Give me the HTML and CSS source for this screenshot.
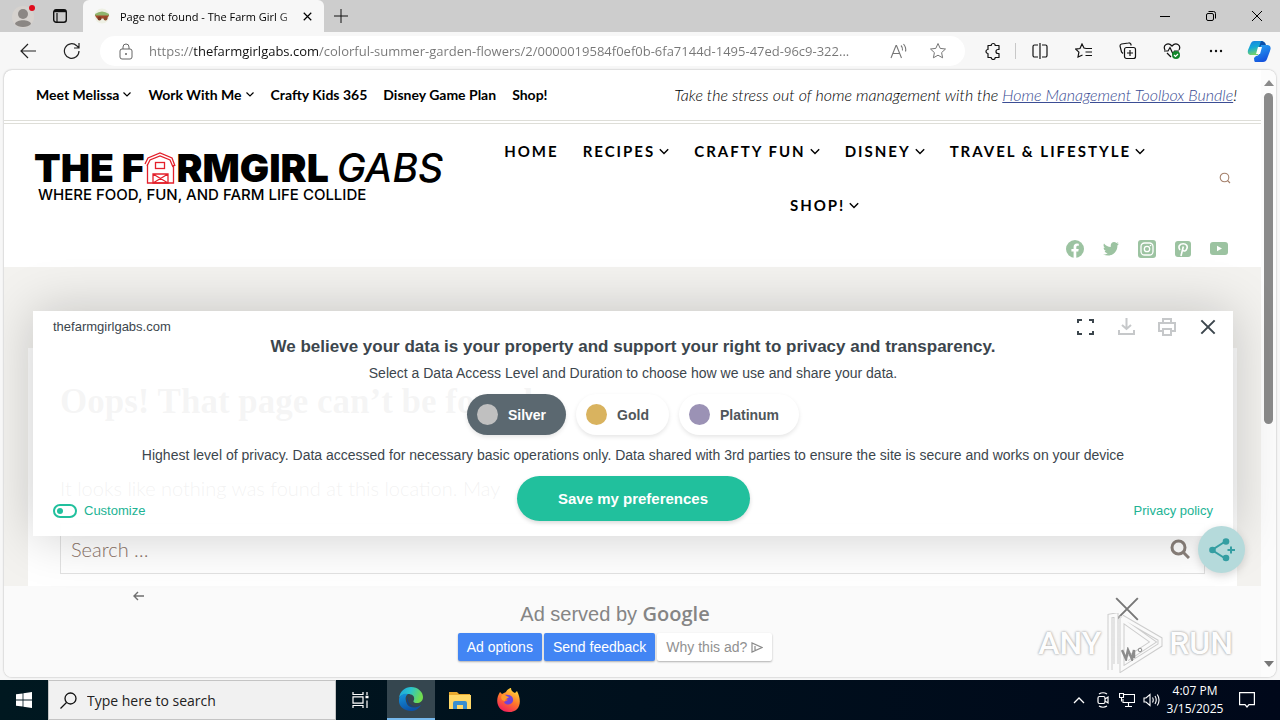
FILE: index.html
```html
<!DOCTYPE html>
<html lang="en">
<head>
    <meta charset="UTF-8">
    <meta name="viewport" content="width=device-width, initial-scale=1.0">
    <title>Page not found - The Farm Girl Gabs</title>
    <link rel="stylesheet" href="styles.css">
</head>
<body>

<svg class="symbols" aria-hidden="true">
    <symbol id="chevron" viewBox="0 0 10 10"><path d="M1.500 3.500 5 7l3.500-3.500" fill="none" stroke="currentColor" stroke-width="1.200"/></symbol>
    <symbol id="cross" viewBox="0 0 12 12"><path d="m1 1 10 10M11 1 1 11" fill="none" stroke="currentColor"/></symbol>
    <symbol id="star" viewBox="0 0 18 18"><path d="m9 1.500 2.200 4.900 5.300.6-3.900 3.600 1 5.200L9 13.200l-4.600 2.600 1-5.200L1.500 7l5.300-.6z" fill="none" stroke="currentColor" stroke-linejoin="round"/></symbol>
</svg>

<div class="browser">
    <div class="tab-strip">
        <button class="profile" aria-label="Profile">
            <svg width="24" height="26" viewBox="0 0 24 26"><circle cx="11" cy="14" r="11" fill="#d6d2ce"/><circle cx="11" cy="11" r="5" fill="#8b8784"/><path d="M3 21c1-5 15-5 16 0-3 4-13 4-16 0z" fill="#8b8784"/><circle cx="20" cy="5" r="3" fill="#e00b1c"/></svg>
        </button>
        <button class="tab-actions" aria-label="Tab actions">
            <svg width="14" height="14" viewBox="0 0 14 14"><rect x=".7" y=".7" width="12.600" height="12.600" rx="2.500" fill="none" stroke="#111" stroke-width="1.400"/><path d="M1 2h12" stroke="#111" stroke-width="2.400"/><path d="M4 4v9" stroke="#111" stroke-width="1.200"/></svg>
        </button>
        <div class="tab">
            <svg width="16" height="16" viewBox="0 0 16 16"><circle cx="8" cy="8" r="7.500" fill="#eef0e4"/><path d="M1 6q7-5 14 0v2H1z" fill="#8fb56d"/><path d="M1 7.500h14l-2 3H3z" fill="#a5482b"/><circle cx="5.500" cy="10.500" r="2" fill="#7a3a22"/><circle cx="11.500" cy="10.500" r="2" fill="#8b4b2c"/></svg>
            <span class="tab-title">Page not found - The Farm Girl G</span>
            <button class="tab-close" aria-label="Close tab"><svg width="9" height="9" viewBox="0 0 12 12"><use href="#cross" stroke-width="1.600"/></svg></button>
        </div>
        <button class="new-tab" aria-label="New tab"><svg width="14" height="14" viewBox="0 0 14 14"><path d="M7 0v14M0 7h14" stroke="#111"/></svg></button>
        <div class="window-buttons">
            <button aria-label="Minimize"><svg width="10" height="10" viewBox="0 0 10 10"><path d="M0 5.500h10" stroke="#000"/></svg></button>
            <button aria-label="Restore"><svg width="10" height="10" viewBox="0 0 10 10" fill="none" stroke="#000"><rect x=".5" y="2.500" width="7" height="7" rx="1.500"/><path d="M2.500.5h5a2 2 0 0 1 2 2v5"/></svg></button>
            <button aria-label="Close"><svg width="12" height="12" viewBox="0 0 12 12"><use href="#cross"/></svg></button>
        </div>
    </div>

    <div class="toolbar">
        <button class="nav-button" aria-label="Back"><svg width="16" height="16" viewBox="0 0 16 16"><path d="M16 8H1M8 1 1 8l7 7" fill="none" stroke="#222" stroke-width="1.200"/></svg></button>
        <button class="nav-button" aria-label="Refresh"><svg width="18" height="18" viewBox="0 0 18 18"><path d="M16 9a7.300 7.300 0 1 1-2.300-5.300L16 6M16 1v5h-5" fill="none" stroke="#222" stroke-width="1.200"/></svg></button>
        <div class="address">
            <svg width="14" height="17" viewBox="0 0 14 17" fill="none" stroke="#666"><rect x="1" y="6" width="12" height="10" rx="2"/><path d="M4 6V4a3 3 0 0 1 6 0v2"/><circle cx="7" cy="11" r="1" fill="#666" stroke="none"/></svg>
            <input class="address-input" type="text" aria-label="Address" value="https://thefarmgirlgabs.com/colorful-summer-garden-flowers/2/0000019584f0ef0b-6fa7144d-1495-47ed-96c9-322...">
            <button aria-label="Read aloud"><svg width="18" height="16" viewBox="0 0 18 16" fill="none" stroke="#767676" stroke-width="1.100"><path d="M1 15 6 2.500h.5L11.500 15M3 10.500h7M11 2.500q2 2 1.500 5M13.500 1q3 3.500 2 7.500"/></svg></button>
            <button aria-label="Favorite this page"><svg width="18" height="18" class="faint"><use href="#star"/></svg></button>
        </div>
        <div class="toolbar-actions">
            <button aria-label="Extensions"><svg width="18" height="18" viewBox="0 0 18 18"><path d="M4 3.500h3.200a2 2 0 0 1 4 0H15v4h-1a2 2 0 0 0 0 4h1v4h-3.800a2 2 0 0 1-4 0H4v-4a2 2 0 0 1 0-4z" fill="none" stroke="#111" stroke-width="1.200" stroke-linejoin="round"/></svg></button>
            <span class="divider"></span>
            <button aria-label="Split screen"><svg width="16" height="16" viewBox="0 0 16 16" fill="none" stroke="#111" stroke-width="1.200"><path d="M6 2H2.500A1.500 1.500 0 0 0 1 3.500v9A1.500 1.500 0 0 0 2.500 14H6M10 2h3.500A1.500 1.500 0 0 1 15 3.500v9a1.500 1.500 0 0 1-1.500 1.500H10M8 0v16"/></svg></button>
            <button aria-label="Favorites"><svg width="18" height="16" viewBox="0 0 18 16" fill="none" stroke="#111" stroke-width="1.200"><path d="M11 5.500 9 5 7 1 5 5.500l-4.200.6 3.100 3L3 14l4.500-2M11 5.500h6M10.500 9H17M10.500 12.500H17"/></svg></button>
            <button aria-label="Collections"><svg width="18" height="18" viewBox="0 0 18 18" fill="none" stroke="#111" stroke-width="1.200"><path d="M4 11.500 2.500 10 1 4a2 2 0 0 1 1.500-2l7-1A2 2 0 0 1 12 2.500v1"/><rect x="5.500" y="5.500" width="11" height="11" rx="2"/><path d="M11 8v6M8 11h6"/></svg></button>
            <button aria-label="Browser essentials"><svg width="18" height="18" viewBox="0 0 18 18" fill="none" stroke="#111" stroke-width="1.200"><path d="M2 8C-.5 3 5-.5 9 4c4-4.500 9.500-1 7 4M1 9h4l2-3.500L10 12l1.500-3H16M4 11l4 4"/><circle cx="13" cy="13" r="4" fill="#13872c" stroke="none"/><path d="m11 13 1.500 1.500L15 12" stroke="#fff"/></svg></button>
            <button aria-label="Settings and more"><svg width="14" height="4" viewBox="0 0 14 4" fill="#111"><circle cx="2" cy="2" r="1.200"/><circle cx="7" cy="2" r="1.200"/><circle cx="12" cy="2" r="1.200"/></svg></button>
            <button aria-label="Copilot"><svg width="24" height="24" viewBox="0 0 24 24"><defs><linearGradient id="cop-a" x2=".3" y2="1"><stop stop-color="#1a7de0"/><stop offset=".5" stop-color="#12a8d8"/><stop offset="1" stop-color="#74d36b"/></linearGradient><linearGradient id="cop-b" x2=".4" y2="1"><stop stop-color="#2aa9f5"/><stop offset="1" stop-color="#1554dd"/></linearGradient></defs><path d="M7 2h9l-5 14H3q-3-1-2-5l3-7q1-2 3-2z" fill="url(#cop-a)"/><path d="M14 2q4 0 5 4l-7 2z" fill="#0c50aa"/><path d="M14 6h7q4 1 2 6l-3 8q-1 3-4 3H8q-1-1-1-4l2-2q3 0 4-4z" fill="url(#cop-b)"/><path d="M11 8h4l-2 7H9z" fill="#fff"/></svg></button>
        </div>
    </div>

    <div class="viewport">
        <div class="page">
            <div class="top-bar">
                <nav class="top-nav" aria-label="Secondary">
                    <a href="#">Meet Melissa<svg width="10" height="10"><use href="#chevron"/></svg></a>
                    <a href="#">Work With Me<svg width="10" height="10"><use href="#chevron"/></svg></a>
                    <a href="#">Crafty Kids 365</a>
                    <a href="#">Disney Game Plan</a>
                    <a href="#">Shop!</a>
                </nav>
                <p class="notice">Take the stress out of home management with the <a href="#">Home Management Toolbox Bundle</a>!</p>
            </div>

            <header class="site-header">
                <div class="logo">
                    <div class="logo-name">
                        <strong>THE F</strong>
                        <svg class="barn" width="32" height="32" viewBox="0 0 32 32" fill="none" stroke="#e3202b" stroke-width="1.300"><path d="M1 12 4 6l12-5 12 5 3 8M3 14l3-6 10-4 10 4 3 7M3.500 12v19h26V13"/><rect x="11.500" y="10.500" width="9" height="6"/><path d="M9 22h15v9H9zM9 22l15 9M24 22 9 31"/></svg>
                        <strong>RMGIRL</strong>
                        <em>GABS</em>
                    </div>
                    <div class="logo-tagline">WHERE FOOD, FUN, AND FARM LIFE COLLIDE</div>
                </div>
                <nav class="main-nav" aria-label="Primary">
                    <a href="#">HOME</a>
                    <a href="#">RECIPES<svg width="12" height="12"><use href="#chevron"/></svg></a>
                    <a href="#">CRAFTY FUN<svg width="12" height="12"><use href="#chevron"/></svg></a>
                    <a href="#">DISNEY<svg width="12" height="12"><use href="#chevron"/></svg></a>
                    <a href="#">TRAVEL &amp; LIFESTYLE<svg width="12" height="12"><use href="#chevron"/></svg></a>
                    <a href="#">SHOP!<svg width="12" height="12"><use href="#chevron"/></svg></a>
                </nav>
                <button class="search-toggle" aria-label="Search"><svg width="12" height="12" viewBox="0 0 12 12" fill="none" stroke="#a5806b" stroke-width="1.100"><circle cx="5.500" cy="5.500" r="4.300"/><path d="m8.500 8.500 2.500 2.500"/></svg></button>
            </header>

            <div class="social">
                <a href="#" aria-label="Facebook"><svg width="18" height="18" viewBox="0 0 18 18"><circle cx="9" cy="9" r="9" fill="#9cc3a1"/><path d="M7.600 18v-6.500H5.400V9h2.200V7c0-2.300 1.300-3.500 3.400-3.500l1.800.2v2.100h-1c-1.200 0-1.500.7-1.500 1.400V9h2.400l-.4 2.500h-2V18z" fill="#fff"/></svg></a>
                <a href="#" aria-label="Twitter"><svg width="16" height="14" viewBox="0 0 16 14"><path d="M16 1.700l-1.600 1.800C14.500 10 9 16 0 12.500c2 .1 3.500-.4 4.700-1.300C3.200 11 2 10.200 1.700 8.900h1.400C1.600 8.400.6 7.200.6 5.700l1.400.4C.5 5 .2 3.200 1 1.600c1.800 2.100 4 3.300 6.800 3.500C7.200 2.200 8.900 0 11 0c1 0 1.800.4 2.400 1l2-.8-1.300 1.900z" fill="#9cc3a1"/></svg></a>
                <a href="#" aria-label="Instagram"><svg width="18" height="18" viewBox="0 0 18 18" fill="none"><rect width="18" height="18" rx="3" fill="#9cc3a1"/><rect x="3" y="3" width="12" height="12" rx="3.500" stroke="#fff" stroke-width="1.300"/><circle cx="9" cy="9" r="2.700" stroke="#fff" stroke-width="1.300"/><circle cx="12.500" cy="5.500" r=".8" fill="#fff"/></svg></a>
                <a href="#" aria-label="Pinterest"><svg width="16" height="16" viewBox="0 0 16 16" fill="none"><rect width="16" height="16" rx="3" fill="#9cc3a1"/><path d="M5 9C2.500 5.500 5 2.700 8.200 2.700c3.300 0 4.600 2.400 3.700 4.900-.8 2.700-3.200 3.100-4.200 1.400M8.300 5.500 6 15" stroke="#fff" stroke-width="1.600"/></svg></a>
                <a href="#" aria-label="YouTube"><svg width="18" height="13" viewBox="0 0 18 13"><rect width="18" height="13" rx="3" fill="#9cc3a1"/><path d="m7 3.800 5 2.700-5 2.700z" fill="#fff"/></svg></a>
            </div>

            <main class="content-area">
                <section class="not-found">
                    <h1>Oops! That page can’t be found.</h1>
                    <p>It looks like nothing was found at this location. May</p>
                    <form class="search-form">
                        <input type="search" aria-label="Search for" placeholder="Search …">
                        <button type="button" aria-label="Search"><svg width="20" height="20" viewBox="0 0 20 20" fill="none" stroke="#8b827c" stroke-width="3"><circle cx="8.500" cy="8.500" r="6.500"/><path d="m13 13 6 6"/></svg></button>
                    </form>
                </section>
            </main>
        </div>

        <div class="scrollbar">
            <svg width="10" height="6" viewBox="0 0 10 6"><path d="M5 0l5 6H0z" fill="#8a8a8a"/></svg>
            <div class="scroll-track"><div class="scroll-thumb"></div></div>
            <svg width="10" height="6" viewBox="0 0 10 6"><path d="M5 6l5-6H0z" fill="#777"/></svg>
        </div>

        <aside class="ad-bar">
            <div class="ad-frame">
                <button class="ad-back" aria-label="Back"><svg width="11" height="10" viewBox="0 0 11 10"><path d="M11 5H1M5 1 1 5l4 4" fill="none" stroke="#6f6f6f" stroke-width="1.400"/></svg></button>
                <div class="ad-title">Ad served by <b>Google</b></div>
                <div class="ad-buttons">
                    <button class="ad-blue">Ad options</button>
                    <button class="ad-blue">Send feedback</button>
                    <button class="ad-white">Why this ad? <svg width="12" height="11" viewBox="0 0 12 11" fill="none" stroke="#8a8a8a" stroke-width="1.200"><path d="M1 1v9l10-4.500zM4 4v4"/></svg></button>
                </div>
            </div>
            <button class="ad-close" aria-label="Close ad"><svg width="26" height="26" viewBox="0 0 12 12"><use href="#cross" stroke-width=".9"/></svg></button>
        </aside>

        <div class="watermark">
            <span>ANY</span>
            <div class="play">
                <svg width="56" height="60" viewBox="0 0 56 60" fill="none"><path d="M3 57V3l6-1v49M15 4l38 22v6L15 56V7l31 22-26 17" stroke="#cdcdcd" stroke-width="5"/><path d="M3 57V3l6-1v49M15 4l38 22v6L15 56V7l31 22-26 17" stroke="#fafafa" stroke-width="3"/></svg>
                <svg class="ad-mark" width="24" height="14" viewBox="0 0 24 14" fill="none" stroke="#8c8c8c" stroke-width="2.500"><path d="M1 3l4 9 2-9 4 9 2-9v8"/><circle cx="19" cy="3" r="1.800" stroke-width="1"/></svg>
            </div>
            <span>RUN</span>
        </div>

        <section class="consent" role="dialog" aria-labelledby="consent-title">
            <div class="consent-top">
                <span>thefarmgirlgabs.com</span>
                <div class="consent-tools">
                    <button aria-label="Full screen"><svg width="17" height="16" viewBox="0 0 17 16" fill="none" stroke="#3c464d" stroke-width="2"><path d="M1 4V1h4M12 1h4v3M16 12v3h-4M5 15H1v-3"/></svg></button>
                    <button aria-label="Download"><svg width="17" height="17" viewBox="0 0 17 17" fill="none" stroke="#c6c8ca" stroke-width="2"><path d="M1 12v4h15v-4M8.500 0v11M4 7l4.500 4L13 7"/></svg></button>
                    <button aria-label="Print"><svg width="18" height="18" viewBox="0 0 18 18" fill="none" stroke="#c6c8ca" stroke-width="2"><path d="M5 5V1h8v4M5 13H1V5h16v8h-4M5 11h8v6H5z"/></svg></button>
                    <button aria-label="Close"><svg width="16" height="16" viewBox="0 0 12 12"><use href="#cross" stroke-width="1.500"/></svg></button>
                </div>
            </div>
            <h2 id="consent-title">We believe your data is your property and support your right to privacy and transparency.</h2>
            <p class="consent-lead">Select a Data Access Level and Duration to choose how we use and share your data.</p>
            <div class="levels">
                <button class="level selected"><i class="dot silver"></i>Silver</button>
                <button class="level"><i class="dot gold"></i>Gold</button>
                <button class="level"><i class="dot platinum"></i>Platinum</button>
            </div>
            <p class="consent-detail">Highest level of privacy. Data accessed for necessary basic operations only. Data shared with 3rd parties to ensure the site is secure and works on your device</p>
            <div class="consent-bottom">
                <a class="customize" href="#"><svg width="24" height="14" viewBox="0 0 24 14"><rect x="1" y="1" width="22" height="12" rx="6" fill="none" stroke="#21c09d" stroke-width="2"/><circle cx="7" cy="7" r="3" fill="#21c09d"/></svg>Customize</a>
                <button class="save">Save my preferences</button>
                <a class="privacy" href="#">Privacy policy</a>
            </div>
        </section>

        <button class="share" aria-label="Share"><svg width="26" height="24" viewBox="0 0 26 24" fill="none" stroke="#349ea2" stroke-width="2"><path d="M17 3 3 12l14 9M18.500 12H26M22 8.500v7"/><g fill="#349ea2" stroke="none"><circle cx="3.500" cy="12" r="3.300"/><circle cx="17" cy="3.500" r="3.300"/><circle cx="17" cy="20" r="3.300"/></g></svg></button>
    </div>
</div>

<div class="taskbar">
    <button class="start" aria-label="Start"><svg width="16" height="16" viewBox="0 0 16 16" fill="#fff"><path d="M0 2.300 6.600 1.400v6.200H0zM7.400 1.300 16 0v7.600H7.400zM0 8.400h6.600v6.200L0 13.700zM7.400 8.400H16V16l-8.600-1.300z"/></svg></button>
    <label class="task-search">
        <svg width="17" height="17" viewBox="0 0 17 17" fill="none" stroke="#111" stroke-width="1.300"><circle cx="10.500" cy="6.500" r="5.500"/><path d="m6.500 10.500-6 6"/></svg>
        <input type="text" placeholder="Type here to search" aria-label="Type here to search">
    </label>
    <button class="task" aria-label="Task view"><svg width="17" height="16" viewBox="0 0 17 16" fill="none" stroke="#fff" stroke-width="1.200"><path d="M1 0v2.500h10V0M1 16v-2.500h10V16M1 4.800h10v6.400H1zM15 0v3M15 8.500V16"/><path d="M13.500 5h3" stroke-width="2.500"/></svg></button>
    <button class="task active" aria-label="Microsoft Edge"><svg width="24" height="24" viewBox="0 0 24 24"><defs><linearGradient id="edge-a" x2="1" y2=".3"><stop stop-color="#1ba0e0"/><stop offset=".5" stop-color="#2bc4cc"/><stop offset="1" stop-color="#70dc4f"/></linearGradient><linearGradient id="edge-b" x2=".4" y2="1"><stop stop-color="#1595dc"/><stop offset="1" stop-color="#0c52a8"/></linearGradient></defs><path d="M0 11C1 4 6 0 12 0c7 0 12 5 12 10 0 4-3 6-6 6-4 0-4-2-3-3 1-4-2-6-6-6-5 0-8 2-9 4z" fill="url(#edge-a)"/><path d="M0 12c1-5 6-6 9-5-3 2-3 6-1 10 2 4 8 5 14 1-3 5-7 6-10 6C5 24-1 19 0 12z" fill="url(#edge-b)"/><path d="M9 10c-3 5 1 11 8 10l5-2c-6 4-14 1-13-8z" fill="#123f86"/></svg></button>
    <button class="task" aria-label="File Explorer"><svg width="22" height="19" viewBox="0 0 22 19"><path d="M0 1h8l2 2h11v15H0z" fill="#e8a92e"/><path d="M0 4h22v14H0z" fill="#ffd868"/><path d="M4 18v-6q0-2 2-2h10q2 0 2 2v6h-4v-4H8v4z" fill="#398fd0"/></svg></button>
    <button class="task" aria-label="Firefox"><svg width="23" height="24" viewBox="0 0 23 24"><defs><linearGradient id="fox" x1=".8" x2=".3" y2="1"><stop stop-color="#ffe23d"/><stop offset=".5" stop-color="#ff7a2a"/><stop offset="1" stop-color="#f21d5c"/></linearGradient></defs><path d="M3 4l2 2 4-2c0-1 3-4 5-4 0 3 2 4 4 5l2-2c6 12 2 21-8 21C1 24-3 13 3 4z" fill="url(#fox)"/><path d="M8 7c3-1 9 1 8 6-1 4-7 5-9 1l4-2-4-2z" fill="#7142d9"/><path d="M5 7c4-1 4 2 7 2-1 2-4 1-4 4-3 0-5-3-3-6z" fill="#ff9b2c"/></svg></button>
    <div class="tray">
        <button aria-label="Show hidden icons"><svg width="12" height="8" viewBox="0 0 12 8"><path d="m1 7 5-5 5 5" fill="none" stroke="#fff" stroke-width="1.300"/></svg></button>
        <button aria-label="Meet now"><svg width="12" height="16" viewBox="0 0 12 16" fill="none" stroke="#fff" stroke-width="1.200"><rect x="1" y="4.500" width="7" height="7" rx="1.500"/><path d="m8 7 3-2v6L8 9M2 2q4-2.500 8 0M2 14q4 2.500 8 0"/></svg></button>
        <button aria-label="Network"><svg width="16" height="14" viewBox="0 0 16 14" fill="none" stroke="#fff" stroke-width="1.100"><path d="M5 1.500h10.500v8H4V6M9.500 9.500v4M6 13.500h7M.5.500h4v4h-4zM2.500 4.500v4"/></svg></button>
        <button aria-label="Volume"><svg width="17" height="14" viewBox="0 0 17 14" fill="none" stroke="#fff" stroke-width="1.100"><path d="M1 5h2l4-3.500v11L3 9H1zM9.500 4.500q1.500 2.500 0 5M12 3q2.500 4 0 8M14.300 1.500q3.500 5.500 0 11"/></svg></button>
        <div class="clock"><span>4:07 PM</span><span>3/15/2025</span></div>
        <button class="notifications" aria-label="Notifications"><svg width="16" height="16" viewBox="0 0 16 16"><path d="M.6.6h14.800v12H10L8 15l-2-2.400H.6z" fill="none" stroke="#fff" stroke-width="1.200"/></svg></button>
    </div>
</div>

</body>
</html>
```
FILE: styles.css
```css
* {
    box-sizing: border-box;
}
body {
    margin: 0;
    height: 100vh;
    display: flex;
    flex-direction: column;
    font-family: "Open Sans", "Noto Sans", sans-serif;
    background: #f7f7f7;
    overflow: hidden;
}
button {
    display: flex;
    align-items: center;
    justify-content: center;
    padding: 0;
    border: none;
    background: none;
    font-family: inherit;
    color: inherit;
    cursor: pointer;
}
svg {
    flex: none;
}
.symbols {
    position: absolute;
    width: 0;
    height: 0;
}
.browser {
    flex: 1;
    min-height: 0;
    display: flex;
    flex-direction: column;
}

/* Tabs */
.tab-strip {
    display: flex;
    align-items: stretch;
    height: 32px;
    flex: none;
    background: #cdcdcd;
}
.profile {
    width: 48px;
}
.tab-actions {
    width: 24px;
}
.tab {
    display: flex;
    align-items: center;
    gap: 10px;
    width: 241px;
    margin-left: 11px;
    padding: 0 12px 0 11px;
    background: #f7f7f7;
    border-radius: 6px 6px 0 0;
    font-size: 11px;
}
.tab-title {
    flex: 1;
    white-space: nowrap;
    -webkit-mask-image: linear-gradient(90deg, #000 92%, rgba(0, 0, 0, 0.3));
    mask-image: linear-gradient(90deg, #000 92%, rgba(0, 0, 0, 0.3));
}
.new-tab {
    width: 34px;
}
.window-buttons {
    display: flex;
    margin-left: auto;
}
.window-buttons button {
    width: 46px;
}

/* Toolbar */
.toolbar {
    display: flex;
    align-items: center;
    height: 38px;
    flex: none;
    padding: 0 0 0 6px;
}
.nav-button {
    width: 44px;
    height: 32px;
}
.address {
    flex: 1;
    display: flex;
    align-items: center;
    height: 30px;
    margin: 0 6px;
    padding: 0 18px 0 19px;
    border-radius: 15px;
    background: #fff;
}
.address-input {
    flex: 1;
    min-width: 0;
    margin: 0 4px 0 16px;
    padding: 0;
    border: none;
    outline: none;
    font-family: inherit;
    font-size: 13px;
    color: transparent;
    background: linear-gradient(90deg, #767676 45px, #111 45px, #111 170px, #767676 170px);
    -webkit-background-clip: text;
    background-clip: text;
}
.address button {
    width: 40px;
}
.address button:last-child {
    width: 18px;
    margin-left: 10px;
}
.faint {
    color: #767676;
}
.toolbar-actions {
    display: flex;
    align-items: center;
}
.toolbar-actions button {
    width: 44px;
    height: 32px;
}
.toolbar-actions button:last-child {
    width: 42px;
}
.divider {
    width: 1px;
    height: 16px;
    margin-right: 2px;
    background: #c8c8c8;
}

/* Web page */
.viewport {
    position: relative;
    flex: 1;
    min-height: 0;
    display: flex;
    margin: 0 4px 3px;
    border-radius: 8px;
    background: #fff;
    box-shadow: 0 0 2px rgba(0, 0, 0, 0.35);
    overflow: hidden;
}
.page {
    flex: 1;
    display: flex;
    flex-direction: column;
    min-width: 0;
    font-family: Lato, sans-serif;
}
.page a {
    color: inherit;
    text-decoration: none;
}
.top-bar {
    display: flex;
    justify-content: space-between;
    align-items: center;
    height: 54px;
    flex: none;
    padding: 0 24px 2px 32px;
    border-bottom: 4px double #deded8;
}
.top-nav {
    display: flex;
    gap: 16px;
    font-size: 14px;
    font-weight: 700;
    color: #000;
}
.top-nav a {
    display: flex;
    align-items: center;
    gap: 3px;
}
.notice {
    margin: 0;
    font-size: 16px;
    font-style: italic;
    font-weight: 300;
    color: #000;
}
.notice a {
    color: #3b4d94;
    text-decoration: underline;
}
.site-header {
    display: flex;
    align-items: center;
    height: 107px;
    flex: none;
    padding: 0 28px 0 30px;
}
.logo {
    font-family: Inter, "Liberation Sans", sans-serif;
    color: #000;
    white-space: nowrap;
}
.logo-name {
    display: flex;
    align-items: center;
    height: 34px;
    font-size: 39px;
}
.logo-name strong {
    font-weight: 900;
}
.logo-name em {
    margin-left: 8px;
    font-weight: 500;
}
.logo-tagline {
    padding-left: 4px;
    font-size: 15px;
    font-weight: 500;
    line-height: 20px;
}
.main-nav {
    flex: 1;
    display: flex;
    flex-wrap: wrap;
    justify-content: center;
    margin: 0 30px 0 20px;
    font-size: 15px;
    font-weight: 700;
    letter-spacing: 2px;
    line-height: 54px;
    color: #000;
}
.main-nav a {
    display: flex;
    align-items: center;
    gap: 3px;
    padding: 0 12px;
}
.search-toggle {
    width: 16px;
}
.social {
    display: flex;
    justify-content: flex-end;
    height: 36px;
    flex: none;
    padding: 0 24px 1px 0;
}
.social a {
    display: flex;
    align-items: center;
    justify-content: center;
    width: 36px;
}
.content-area {
    flex: 1;
    padding: 81px 24px 0;
    background: #f3f2ef;
}
.not-found {
    height: 100%;
    padding: 32px 32px 0;
    background: #fff;
}
.not-found h1 {
    margin: 0;
    font-family: "Liberation Serif", serif;
    font-size: 35px;
    line-height: 44px;
    color: #444;
}
.not-found p {
    margin: 48px 0 19px;
    font-size: 20px;
    font-weight: 300;
    line-height: 32px;
}
.search-form {
    display: flex;
    align-items: center;
    height: 51px;
    padding: 0 14px 0 10px;
    border: 1px solid #e2e2e2;
}
.search-form input {
    flex: 1;
    padding: 0;
    border: none;
    outline: none;
    font-family: inherit;
    font-size: 20px;
    font-weight: 300;
    background: none;
}
.search-form input::placeholder {
    color: #8b7468;
}

/* Scrollbar */
.scrollbar {
    display: flex;
    flex-direction: column;
    align-items: center;
    width: 15px;
    padding: 10px 0;
    gap: 7px;
    background: #fcfcfc;
}
.scroll-track {
    flex: 1;
}
.scroll-thumb {
    width: 9px;
    height: 59%;
    border-radius: 5px;
    background: #8a8a8a;
}

/* Anchor ad */
.ad-bar {
    position: absolute;
    left: 0;
    right: 15px;
    bottom: 0;
    display: flex;
    justify-content: center;
    align-items: flex-start;
    gap: 14px;
    height: 91px;
    padding-left: 5px;
    background: #fafafa;
    font-family: "Liberation Sans", Arial, sans-serif;
}
.ad-frame {
    position: relative;
    width: 970px;
    padding-top: 16px;
}
.ad-back {
    position: absolute;
    top: 5px;
    left: 3px;
}
.ad-title {
    text-align: center;
    font-size: 20px;
    line-height: 24px;
    color: #858585;
}
.ad-title b {
    font-family: "Open Sans", sans-serif;
    font-weight: 600;
}
.ad-buttons {
    display: flex;
    justify-content: center;
    gap: 2px;
    margin-top: 7px;
}
.ad-buttons button {
    gap: 4px;
    height: 28px;
    padding: 0 9px;
    border-radius: 2px;
    font-size: 14px;
    box-shadow: 0 1px 2px rgba(0, 0, 0, 0.3);
}
.ad-buttons .ad-blue {
    background: #4285f4;
    color: #fff;
}
.ad-buttons .ad-white {
    background: #fff;
    color: #919191;
}
.ad-close {
    margin-top: 10px;
    color: #777;
}
.watermark {
    position: absolute;
    right: 43px;
    bottom: 4px;
    display: flex;
    align-items: center;
    gap: 6px;
    font-family: Roboto, sans-serif;
    font-size: 32px;
    font-weight: 500;
    color: #fdfdfd;
    text-shadow: 0 0 2px #aaa, 0 0 3px #bbb;
}
.play {
    display: flex;
    position: relative;
}
.ad-mark {
    position: absolute;
    left: 14px;
    bottom: 12px;
}

/* Privacy dialog */
.consent {
    position: absolute;
    left: 29px;
    right: 43px;
    bottom: 141px;
    height: 225px;
    padding: 4px 20px 15px;
    background: rgba(255, 255, 255, 0.95);
    box-shadow: 0 0 50px rgba(0, 0, 0, 0.2);
    font-family: "Liberation Sans", Arial, sans-serif;
    font-size: 14px;
    color: #3c464d;
    text-align: center;
}
.consent-top {
    display: flex;
    justify-content: space-between;
    align-items: center;
    height: 23px;
    font-size: 13px;
}
.consent-tools {
    display: flex;
    gap: 23px;
    margin-right: -4px;
}
.consent-tools button {
    width: 18px;
}
.consent h2 {
    margin: 0;
    font-size: 17px;
    line-height: 18px;
}
.consent p {
    margin: 0;
    line-height: 18px;
}
.consent .consent-lead {
    margin-top: 8px;
}
.levels {
    display: flex;
    justify-content: center;
    gap: 10px;
    margin: 12px 0 11px;
}
.level {
    gap: 10px;
    height: 41px;
    padding: 0 20px 0 10px;
    border-radius: 21px;
    background: #fff;
    box-shadow: 0 2px 4px rgba(0, 0, 0, 0.1);
    font-size: 14px;
    font-weight: 700;
    color: #50565a;
}
.selected {
    background: #5b6870;
    color: #fff;
}
.dot {
    width: 21px;
    height: 21px;
    border-radius: 50%;
}
.silver {
    background: #c0c0c0;
}
.gold {
    background: #d9b35f;
}
.platinum {
    background: #9b92b5;
}
.consent-bottom {
    display: grid;
    grid-template-columns: 1fr auto 1fr;
    align-items: end;
    margin-top: 12px;
}
.consent-bottom a {
    margin-bottom: 2px;
    font-size: 13px;
    line-height: 16px;
    color: #21b394;
    text-decoration: none;
}
.customize {
    display: flex;
    align-items: center;
    gap: 7px;
}
.save {
    width: 233px;
    height: 45px;
    border-radius: 23px;
    background: #21c09d;
    box-shadow: 0 2px 4px rgba(0, 0, 0, 0.15);
    font-size: 15px;
    font-weight: 700;
    color: #fff;
}
.privacy {
    text-align: right;
}
.share {
    position: absolute;
    right: 31px;
    bottom: 104px;
    width: 47px;
    height: 47px;
    border-radius: 50%;
    background: #b5dadb;
    box-shadow: 0 3px 8px rgba(0, 0, 0, 0.15);
}

/* Windows taskbar */
.taskbar {
    display: flex;
    height: 40px;
    flex: none;
    background: linear-gradient(90deg, #001820, #00081a);
    color: #fff;
}
.start {
    width: 48px;
}
.task-search {
    display: flex;
    align-items: center;
    gap: 10px;
    width: 288px;
    padding-left: 11px;
    border: 1px solid #c4c4c4;
    background: #f1f1f1;
}
.task-search input {
    flex: 1;
    min-width: 0;
    padding: 0;
    border: none;
    outline: none;
    background: none;
    font-family: inherit;
    font-size: 14px;
}
.task-search input::placeholder {
    color: #222;
}
.task {
    width: 49px;
}
.active {
    margin-left: 2px;
    width: 48px;
    background: #35464f;
    border-bottom: 2px solid #76b9ed;
}
.tray {
    display: flex;
    margin-left: auto;
}
.tray button {
    width: 24px;
}
.clock {
    display: flex;
    flex-direction: column;
    align-items: center;
    justify-content: center;
    width: 64px;
    font-size: 12px;
    line-height: 18px;
}
.tray .notifications {
    width: 40px;
    margin-right: 13px;
}
```
